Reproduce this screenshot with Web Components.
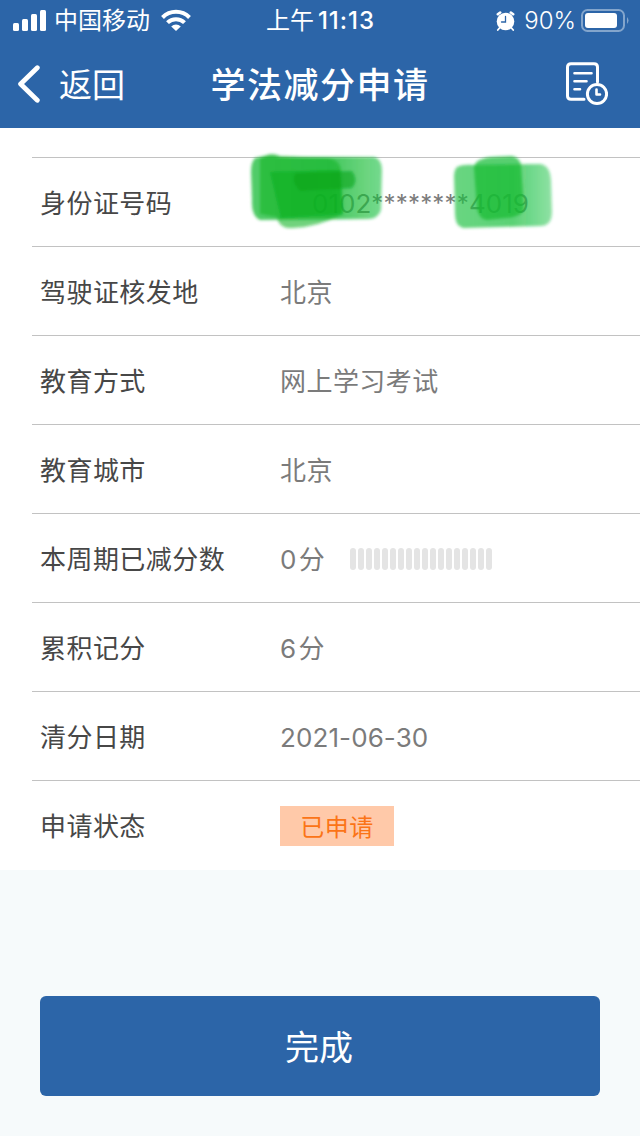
<!DOCTYPE html>
<html lang="zh-CN">
<head>
<meta charset="UTF-8">
<title>学法减分申请</title>
<style>
  :root {
    --primary: #2c65a8;
    --page-bg: #f6fafb;
    --line: #c2c2c2;
    --label: #474747;
    --value: #7b7b7b;
  }
  body {
    margin: 0;
    width: 640px;
    height: 1136px;
    overflow: hidden;
    background: var(--page-bg);
    font-family: Inter, "Noto Sans CJK SC", sans-serif;
  }
</style>
</head>
<body>
<apply-page></apply-page>

<script>
class StatusBar extends HTMLElement {
  constructor() {
    super();
    const shadow = this.attachShadow({ mode: 'open' });
    shadow.innerHTML = `
      <style>
        :host {
          display: grid;
          grid-template-columns: 1fr auto 1fr;
          align-items: center;
          height: 40px;
          padding: 0 11px 0 13px;
          color: #fff;
          font-size: 24px;
          line-height: 42px;
          white-space: nowrap;
        }
        div { display: flex; align-items: center; }
        svg { display: block; }
        .carrier { margin: 0 11px 0 8px; }
        .time { gap: 4px; margin-right: 2px; }
        .time b { font-weight: 500; letter-spacing: 1px; margin-right: -1px; }
        .right { justify-content: flex-end; }
        .level { margin: 0 5px 0 9px; font-size: 24px; font-weight: 350; letter-spacing: 0; }
      </style>
      <div>
        <svg width="33" height="22" fill="#fff">
          <rect x="0" y="13" width="6" height="8" rx="1.5"/>
          <rect x="9" y="9" width="6" height="12" rx="1.5"/>
          <rect x="18" y="4" width="6" height="17" rx="1.5"/>
          <rect x="27" y="0" width="6" height="21" rx="1.5"/>
        </svg>
        <span class="carrier">中国移动</span>
        <svg width="30" height="24" viewBox="0 0 30 24" fill="none" stroke="#fff" stroke-width="4">
          <path d="M1.5 8.5A19 19 0 0 1 28.5 8.5"/>
          <path d="M6.5 13.7A12 12 0 0 1 23.5 13.7"/>
          <path d="M15 22L10.2 17.4A7 7 0 0 1 19.8 17.4Z" fill="#fff" stroke="none"/>
        </svg>
      </div>
      <div class="time"><span>上午</span><b>11:13</b></div>
      <div class="right">
        <svg width="19" height="21" viewBox="0 0 19 21" fill="none" stroke="#fff" stroke-linecap="round">
          <circle cx="9.5" cy="10.5" r="8.8" fill="#fff" stroke="none"/>
          <path d="M1.8 3.2L4.2 1.5M17.2 3.2L14.8 1.5" stroke-width="2.6"/>
          <path d="M3.5 17L1.8 19M15.5 17L17.2 19" stroke-width="1.8"/>
          <path d="M9.5 5.5V11H5.5" stroke="#2c65a8" stroke-width="1.3"/>
        </svg>
        <span class="level">90%</span>
        <svg width="48" height="24" viewBox="0 0 48 24">
          <rect x="1" y="1" width="42" height="21" rx="5.5" fill="none" stroke="#83a5cc" stroke-width="2"/>
          <rect x="4" y="4" width="32" height="15" rx="3" fill="#fff"/>
          <path d="M46 8Q49 11.5 46 15Z" fill="#83a5cc"/>
        </svg>
      </div>
    `;
  }
}

class NavBar extends HTMLElement {
  constructor() {
    super();
    const shadow = this.attachShadow({ mode: 'open' });
    shadow.innerHTML = `
      <style>
        :host {
          display: grid;
          grid-template-columns: 1fr auto 1fr;
          align-items: center;
          height: 88px;
          padding: 0 32px 0 18px;
          color: #fff;
        }
        .back {
          display: flex;
          align-items: center;
          gap: 19px;
          font-size: 33px;
          line-height: 48px;
        }
        .back span { padding-top: 2px; }
        svg { display: block; }
        h1 {
          margin: 2px -14px 0 0;
          font-size: 35px;
          line-height: 48px;
          font-weight: 500;
          letter-spacing: 1.5px;
        }
        .history { justify-self: end; margin-top: -1px; }
      </style>
      <div class="back">
        <svg width="22" height="38" viewBox="0 0 22 38" fill="none" stroke="#fff" stroke-width="4.8" stroke-linecap="round" stroke-linejoin="round">
          <path d="M19.3 2.7L2.6 19L19.3 35.3"/>
        </svg>
        <span>返回</span>
      </div>
      <h1><slot></slot></h1>
      <svg class="history" width="42" height="44" viewBox="0 0 42 44" fill="none" stroke="#fff" stroke-width="3" stroke-linecap="round" stroke-linejoin="round">
        <path d="M18 37.3H5Q1.5 37.3 1.5 34V5Q1.5 1.7 5 1.7H28Q31.5 1.7 31.5 5V20"/>
        <path d="M8.5 11.3H25.5M8.5 19.3H20.5M8.5 27.3H14" stroke-width="2.6"/>
        <circle cx="31" cy="32" r="9.6"/>
        <path d="M30.5 27.5V32.5H34" stroke-width="2.6"/>
      </svg>
    `;
  }
}

class InfoRow extends HTMLElement {
  constructor() {
    super();
    const shadow = this.attachShadow({ mode: 'open' });
    shadow.innerHTML = `
      <style>
        :host {
          display: flex;
          align-items: center;
          box-sizing: border-box;
          height: 89px;
          margin-left: 32px;
          padding: 2px 0 0 8px;
          border-top: 1px solid var(--line);
          font-size: 26px;
          line-height: 42px;
          letter-spacing: 0.45px;
          white-space: nowrap;
        }
        .label { width: 240px; color: var(--label); padding-top: 2px; }
        .value {
          display: flex;
          align-items: center;
          color: var(--value);
        }
        ::slotted(.text) { padding-top: 1px; }
        ::slotted(.date) { letter-spacing: 0.1px; }
      </style>
      <span class="label">${this.getAttribute('label')}</span>
      <div class="value"><slot></slot></div>
    `;
  }
}

// ID number with marker strokes painted over both ends
class MaskedId extends HTMLElement {
  constructor() {
    super();
    const shadow = this.attachShadow({ mode: 'open' });
    shadow.innerHTML = `
      <style>
        :host { display: flex; position: relative; padding: 2px 0 0 32px; letter-spacing: 0; }
        .stars { letter-spacing: 0.2px; font-size: 24px; }
        svg { position: absolute; left: -40px; top: -34px; }
      </style>
      <span>0102</span><span class="stars">********</span><span>4019</span>
      <svg width="330" height="100" viewBox="240 147 330 100">
        <defs>
          <filter id="soft" x="-10%" y="-10%" width="120%" height="120%"><feGaussianBlur stdDeviation="1.8"/></filter>
          <linearGradient id="left"><stop offset="0" stop-color="#18bb38" stop-opacity=".76"/><stop offset=".6" stop-color="#18bb38" stop-opacity=".82"/><stop offset="1" stop-color="#18be3c" stop-opacity=".58"/></linearGradient>
          <linearGradient id="right"><stop offset="0" stop-color="#18c040" stop-opacity=".66"/><stop offset=".6" stop-color="#18c040" stop-opacity=".72"/><stop offset="1" stop-color="#18c040" stop-opacity=".48"/></linearGradient>
        </defs>
        <g filter="url(#soft)">
          <path d="M255 158Q268 154 280 157L374 157Q382 159 382 170L381 210Q378 219 368 219L260 220Q251 216 252 200L251 172Q251 162 255 158Z" fill="url(#left)" />
          <path d="M260 159Q270 151 280 156L325 158Q340 159 341 170L343 214Q318 227 293 228Q279 229 277 217L260 214Z" fill="#14b529" fill-opacity=".6"/>
          <path d="M270 172L340 170L343 214L281 218Z" fill="#09ad1b" fill-opacity=".5"/>
          <path d="M296 173L352 171Q359 180 352 188L300 191Q290 181 296 173Z" fill="#04a51a" fill-opacity=".6"/>
          <path d="M457 167Q463 164 474 165L540 164Q550 165 551 180L552 212Q552 226 540 226L463 228Q455 226 455 214L454 177Q454 170 457 167Z" fill="url(#right)"/>
          <path d="M474 168Q474 159 491 157L512 156Q520 158 521 165L524 209Q522 217 505 218L487 220Q479 219 477 209Z" fill="#14ba32" fill-opacity=".7"/>
        </g>
      </svg>
    `;
  }
}

class ScoreMeter extends HTMLElement {
  constructor() {
    super();
    const shadow = this.attachShadow({ mode: 'open' });
    shadow.innerHTML = `
      <style>
        :host { display: flex; gap: 2px; }
        i { width: 6px; height: 22px; border-radius: 3px; background: #e4e4e4; }
      </style>
      ${'<i></i>'.repeat(Number(this.getAttribute('count')))}
    `;
  }
}

class StatusTag extends HTMLElement {
  constructor() {
    super();
    const shadow = this.attachShadow({ mode: 'open' });
    shadow.innerHTML = `
      <style>
        :host {
          display: block;
          box-sizing: border-box;
          width: 114px;
          height: 40px;
          background: #ffc9a9;
          color: #fb7417;
          font-size: 24px;
          line-height: 43px;
          text-align: center;
        }
      </style>
      <slot></slot>
    `;
  }
}

class PrimaryButton extends HTMLElement {
  constructor() {
    super();
    const shadow = this.attachShadow({ mode: 'open' });
    shadow.innerHTML = `
      <style>
        :host { display: block; }
        button {
          display: block;
          width: 100%;
          height: 100px;
          padding: 0 2px 2px 0;
          border: 0;
          border-radius: 6px;
          background: var(--primary);
          color: #fff;
          font: inherit;
          font-size: 34px;
        }
      </style>
      <button><slot></slot></button>
    `;
  }
}

class ApplyPage extends HTMLElement {
  constructor() {
    super();
    const shadow = this.attachShadow({ mode: 'open' });
    shadow.innerHTML = `
      <style>
        :host { display: block; }
        header { background: var(--primary); }
        main { background: #fff; padding: 29px 0 1px; }
        footer { padding: 126px 40px 40px; }
        .score { display: flex; width: 70px; gap: 2px; }
      </style>
      <header>
        <status-bar></status-bar>
        <nav-bar>学法减分申请</nav-bar>
      </header>
      <main>
        <info-row label="身份证号码"><masked-id></masked-id></info-row>
        <info-row label="驾驶证核发地"><span class="text">北京</span></info-row>
        <info-row label="教育方式"><span class="text">网上学习考试</span></info-row>
        <info-row label="教育城市"><span class="text">北京</span></info-row>
        <info-row label="本周期已减分数"><span class="score text"><span>0</span><span>分</span></span><score-meter count="18"></score-meter></info-row>
        <info-row label="累积记分"><span class="score text"><span>6</span><span>分</span></span></info-row>
        <info-row label="清分日期"><span class="text date">2021-06-30</span></info-row>
        <info-row label="申请状态"><status-tag>已申请</status-tag></info-row>
      </main>
      <footer>
        <primary-button>完成</primary-button>
      </footer>
    `;
  }
}

customElements.define('status-bar', StatusBar);
customElements.define('nav-bar', NavBar);
customElements.define('info-row', InfoRow);
customElements.define('masked-id', MaskedId);
customElements.define('score-meter', ScoreMeter);
customElements.define('status-tag', StatusTag);
customElements.define('primary-button', PrimaryButton);
customElements.define('apply-page', ApplyPage);
</script>
</body>
</html>
